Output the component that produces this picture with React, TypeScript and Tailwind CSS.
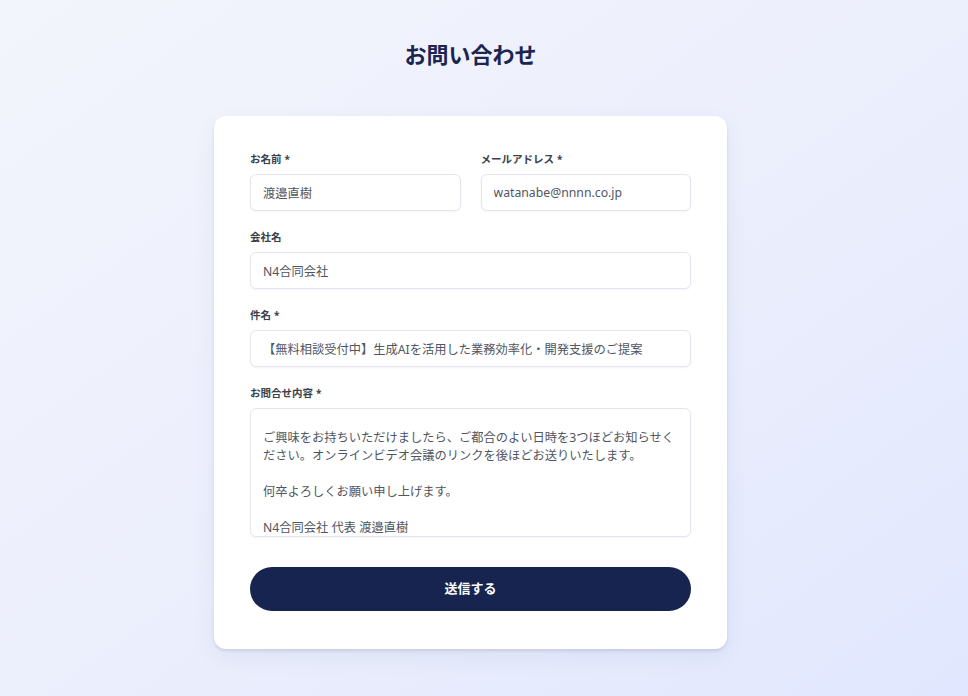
import React from 'react';

const Label: React.FC<{ text: string; required?: boolean }> = ({ text, required }) => (
  <label className="block text-[10.5px] leading-[14px] font-bold text-[#3b3f4a] mb-2">
    {text}
    {required && <span className="ml-[3px] text-[10px]">*</span>}
  </label>
);

const inputClass =
  'block w-full h-[37px] px-3 rounded-md border border-[#e3e6ee] bg-white text-[12.25px] text-[#50555f] shadow-[0_1px_2px_rgba(30,40,80,0.05)] outline-none';

export default function App() {
  const message =
    'ご興味をお持ちいただけましたら、ご都合のよい日時を3つほどお知らせください。オンラインビデオ会議のリンクを後ほどお送りいたします。\n\n何卒よろしくお願い申し上げます。\n\nN4合同会社 代表 渡邉直樹';

  return (
    <div className="min-h-screen w-full bg-gradient-to-br from-[#f3f5fc] via-[#eceffc] to-[#e1e7fe] font-['Noto_Sans','Noto_Sans_CJK_JP',sans-serif]">
      <div className="flex flex-col items-center pt-10 pb-12 pr-[27px]">
        <h1 className="text-[22px] leading-[29px] font-bold text-[#1b2550] mb-[47px]">お問い合わせ</h1>

        <form
          className="w-[513px] bg-white rounded-xl px-9 pt-9 pb-[38px] shadow-[0_2px_3px_rgba(40,50,90,0.12),0_8px_24px_rgba(40,50,90,0.06)]"
          onSubmit={(e) => e.preventDefault()}
        >
          <div className="flex flex-col gap-[19px]">
            <div className="grid grid-cols-2 gap-5">
              <div>
                <Label text="お名前" required />
                <input className={inputClass} defaultValue="渡邉直樹" />
              </div>
              <div>
                <Label text="メールアドレス" required />
                <input className={inputClass} defaultValue="watanabe@nnnn.co.jp" />
              </div>
            </div>

            <div>
              <Label text="会社名" />
              <input className={inputClass} defaultValue="N4合同会社" />
            </div>

            <div>
              <Label text="件名" required />
              <input
                className={inputClass}
                defaultValue="【無料相談受付中】生成AIを活用した業務効率化・開発支援のご提案"
              />
            </div>

            <div>
              <Label text="お問合せ内容" required />
              <textarea
                className="block w-full h-[129px] px-3 pt-5 pb-0 rounded-md border border-[#e3e6ee] bg-white text-[12.25px] leading-[18px] text-[#50555f] shadow-[0_1px_2px_rgba(30,40,80,0.05)] outline-none resize-none overflow-hidden"
                defaultValue={message}
              />
            </div>
          </div>

          <button
            type="submit"
            className="mt-[30px] w-full h-[44px] rounded-full bg-[#16244f] text-white text-[13px] font-bold"
          >
            送信する
          </button>
        </form>
      </div>
    </div>
  );
}
